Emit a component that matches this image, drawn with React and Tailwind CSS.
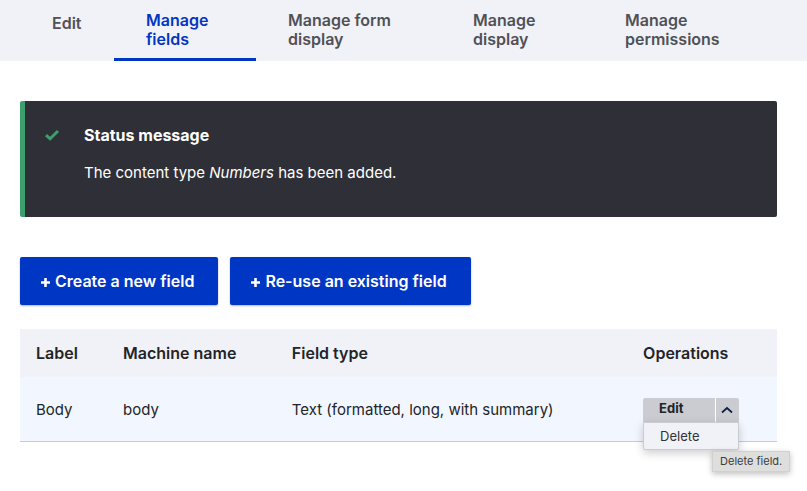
import React from "react";

const tabs = [
  { label: "Edit", single: true },
  { label: "Manage fields", active: true },
  { label: "Manage form display" },
  { label: "Manage display" },
  { label: "Manage permissions" },
];

function Tabs() {
  return (
    <nav aria-label="Primary tabs" className="bg-[#f1f2f7] px-5">
      <ul className="grid grid-cols-[94fr_142fr_185fr_152fr_194fr]">
        {tabs.map((tab) => (
          <li key={tab.label} className="flex">
            <a
              href="#"
              aria-current={tab.active ? "page" : undefined}
              className={
                "block w-full border-b-3 pr-6 pb-[9px] pl-8 text-[16px] leading-[19px] font-semibold " +
                (tab.single ? "pt-[14px] " : "pt-[11px] ") +
                (tab.active
                  ? "border-[#0036c4] text-[#0036c4]"
                  : "border-transparent text-[#505156]")
              }
            >
              {tab.label}
            </a>
          </li>
        ))}
      </ul>
    </nav>
  );
}

function StatusMessage() {
  return (
    <section
      role="status"
      className="flex rounded-xs border-l-5 border-[#3ba06d] bg-[#2f2f38] pt-6 pb-8 pl-[19px] text-white"
    >
      <svg viewBox="0 0 16 16" className="mt-[2px] mr-6 h-4 w-4 shrink-0" aria-hidden="true">
        <path
          d="M2 8.2 L6.1 11.8 L14 4"
          fill="none"
          stroke="#3ba06d"
          strokeWidth="3"
        />
      </svg>
      <div>
        <h2 className="text-[16px] leading-5 font-bold">Status message</h2>
        <p className="mt-4 text-[15px] leading-6">
          The content type <em>Numbers</em> has been added.
        </p>
      </div>
    </section>
  );
}

function ActionLink({ children }) {
  return (
    <a
      href="#"
      className="flex h-12 items-center gap-1 rounded-xs bg-[#0036c4] pr-6 pl-5 text-[16px] font-semibold text-white shadow-[0_1px_2px_rgba(0,0,0,0.3)]"
    >
      <svg viewBox="0 0 11 11" className="mt-[2px] h-[11px] w-[11px]" aria-hidden="true">
        <path d="M5.5 1v9M1 5.5h9" stroke="white" strokeWidth="2.6" fill="none" />
      </svg>
      {children}
    </a>
  );
}

function Operations() {
  return (
    <div className="relative h-6 w-24">
      <div className="flex h-6 w-24 gap-px rounded-t-xs bg-white text-[13px] text-[#232429]">
        <button type="button" className="flex-1 rounded-tl-xs bg-[#cbccd2] px-4 pb-[2px] text-left font-bold">
          Edit
        </button>
        <button
          type="button"
          aria-label="List additional actions"
          aria-expanded="true"
          className="flex w-[23px] items-center justify-center rounded-tr-xs bg-[#cbccd2] pr-px"
        >
          <svg viewBox="0 0 12 8" className="h-2 w-3" aria-hidden="true">
            <path d="M1 6.5 L6 2 L11 6.5" fill="none" stroke="#101f40" strokeWidth="1.7" />
          </svg>
        </button>
      </div>
      <ul className="absolute top-6 left-0 w-24 rounded-b-xs border border-[#cbccd2] bg-[#f1f2f7] shadow-[0_3px_10px_rgba(0,0,0,0.2)]">
        <li>
          <a href="#" className="block px-4 text-[13px] leading-[26px] text-[#303136]">
            Delete
          </a>
        </li>
      </ul>
      <div
        role="tooltip"
        className="absolute top-[53px] left-[69px] border border-[#d0d0ce] bg-[#dededc] px-[7px] text-[11px] leading-[19px] whitespace-nowrap text-[#3c3c3c] shadow-[0_2px_6px_rgba(0,0,0,0.25)]"
      >
        Delete field.
      </div>
    </div>
  );
}

function FieldsTable() {
  return (
    <table className="mt-6 w-full table-fixed text-left text-[#232429]">
      <colgroup>
        <col className="w-[11.5%]" />
        <col className="w-[22.3%]" />
        <col className="w-[46.4%]" />
        <col className="w-[19.8%]" />
      </colgroup>
      <thead>
        <tr className="h-12 bg-[#f1f2f7] text-[16px]">
          <th className="px-4 font-semibold">Label</th>
          <th className="px-4 font-semibold">Machine name</th>
          <th className="px-4 font-semibold">Field type</th>
          <th className="px-4 font-semibold">Operations</th>
        </tr>
      </thead>
      <tbody>
        <tr className="h-16 border-b border-[#c9cad0] bg-[#f2f7ff] text-[15px]">
          <td className="px-4 pt-[2px]">Body</td>
          <td className="px-4 pt-[2px]">body</td>
          <td className="px-4 pt-[2px]">Text (formatted, long, with summary)</td>
          <td className="px-4 pt-[2px]">
            <Operations />
          </td>
        </tr>
      </tbody>
    </table>
  );
}

export default function App() {
  return (
    <div className="min-h-screen bg-white font-['Inter','Liberation_Sans',sans-serif]">
      <Tabs />
      <main className="pt-10 pr-[30px] pb-10 pl-5">
        <StatusMessage />
        <div className="mt-10 flex flex-wrap gap-3">
          <ActionLink>Create a new field</ActionLink>
          <ActionLink>Re-use an existing field</ActionLink>
        </div>
        <FieldsTable />
      </main>
    </div>
  );
}
